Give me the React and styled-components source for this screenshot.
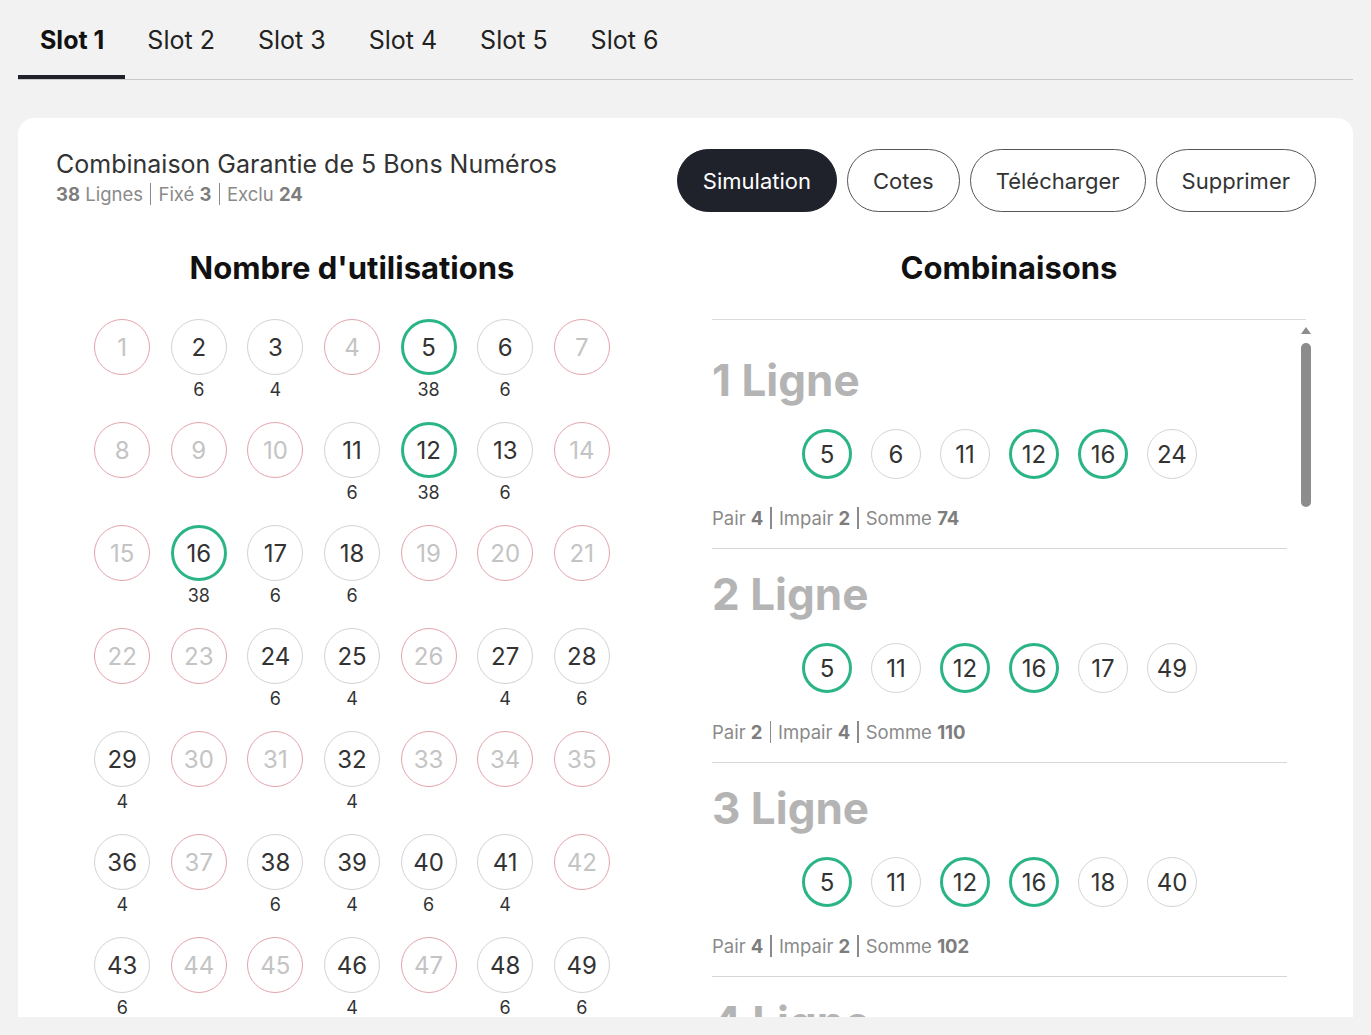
import React from 'react';
import styled, { createGlobalStyle } from 'styled-components';

const GlobalStyle = createGlobalStyle`
  html, body {
    margin: 0;
    padding: 0;
    background: #f2f2f2;
    font-family: Inter, "Liberation Sans", sans-serif;
    color: #222;
  }
  * { box-sizing: border-box; }
`;

const EXCLUDED = [1, 4, 7, 8, 9, 10, 14, 15, 19, 20, 21, 22, 23, 26, 30, 31, 33, 34, 35, 37, 42, 44, 45, 47];
const FIXED = [5, 12, 16];
const COUNTS = {
  2: 6, 3: 4, 5: 38, 6: 6, 11: 6, 12: 38, 13: 6, 16: 38, 17: 6, 18: 6,
  24: 6, 25: 4, 27: 4, 28: 6, 29: 4, 32: 4, 36: 4, 38: 6, 39: 4, 40: 6,
  41: 4, 43: 6, 46: 4, 48: 6, 49: 6,
};

const LINES = [
  { nums: [5, 6, 11, 12, 16, 24], pair: 4, impair: 2, somme: 74 },
  { nums: [5, 11, 12, 16, 17, 49], pair: 2, impair: 4, somme: 110 },
  { nums: [5, 11, 12, 16, 18, 40], pair: 4, impair: 2, somme: 102 },
  { nums: [5, 12, 13, 16, 25, 41], pair: 2, impair: 4, somme: 112 },
];

const kindOf = (n) => (FIXED.includes(n) ? 'fixed' : EXCLUDED.includes(n) ? 'excluded' : 'normal');

const App = () => {
  const numbers = Array.from({ length: 49 }, (_, i) => i + 1);
  return (
    <>
      <GlobalStyle />
      <Page>
        <Tabs>
          {['Slot 1', 'Slot 2', 'Slot 3', 'Slot 4', 'Slot 5', 'Slot 6'].map((t, i) => (
            <Tab key={t} active={i === 0}>{t}</Tab>
          ))}
        </Tabs>
        <Viewport>
          <Card>
            <CardHeader>
              <TitleBlock>
                <Title>Combinaison Garantie de 5 Bons Numéros</Title>
                <Meta>
                  <b>38</b> Lignes<Sep />Fixé <b>3</b><Sep />Exclu <b>24</b>
                </Meta>
              </TitleBlock>
              <Actions>
                <PillButton dark>Simulation</PillButton>
                <PillButton>Cotes</PillButton>
                <PillButton>Télécharger</PillButton>
                <PillButton>Supprimer</PillButton>
              </Actions>
            </CardHeader>
            <Columns>
              <Column>
                <Heading>Nombre d'utilisations</Heading>
                <NumberGrid>
                  {numbers.map((n) => (
                    <NumberCell key={n}>
                      <Ball kind={kindOf(n)}>{n}</Ball>
                      <Count>{COUNTS[n] || ''}</Count>
                    </NumberCell>
                  ))}
                </NumberGrid>
              </Column>
              <Column>
                <HeadingBox>
                  <Heading>Combinaisons</Heading>
                </HeadingBox>
                <ScrollArea>
                  <LineList>
                    {LINES.map((line, i) => (
                      <LineBlock key={i}>
                        <LineTitle>{i + 1} Ligne</LineTitle>
                        <LineBalls>
                          {line.nums.map((n) => (
                            <SmallBall key={n} fixed={FIXED.includes(n)}>{n}</SmallBall>
                          ))}
                        </LineBalls>
                        <LineStats>
                          Pair <b>{line.pair}</b><Sep />Impair <b>{line.impair}</b><Sep />Somme <b>{line.somme}</b>
                        </LineStats>
                      </LineBlock>
                    ))}
                  </LineList>
                  <Scrollbar>
                    <ScrollArrow />
                    <ScrollThumb />
                  </Scrollbar>
                </ScrollArea>
              </Column>
            </Columns>
          </Card>
        </Viewport>
      </Page>
    </>
  );
};

export default App;

const Page = styled.div`
  height: 100vh;
  display: flex;
  flex-direction: column;
  padding: 0 18px 18px;
`;

const Tabs = styled.div`
  display: flex;
  border-bottom: 1px solid #c9c9c9;
`;

const Tab = styled.div`
  padding: 22px 21px 17px 22px;
  font-size: 25px;
  line-height: 36px;
  font-weight: ${(p) => (p.active ? 700 : 400)};
  color: ${(p) => (p.active ? '#111' : '#222')};
  border-bottom: 4px solid ${(p) => (p.active ? '#1f222b' : 'transparent')};
  margin-bottom: 0;
  cursor: pointer;
`;

const Viewport = styled.div`
  flex: 1;
  overflow: hidden;
  margin-top: 38px;
`;

const Card = styled.div`
  background: #fff;
  border-radius: 16px;
  padding: 31px 37px 40px 38px;
`;

const CardHeader = styled.div`
  display: flex;
  justify-content: space-between;
  align-items: flex-start;
`;

const TitleBlock = styled.div`
  display: flex;
  flex-direction: column;
`;

const Title = styled.div`
  font-size: 25px;
  line-height: 30px;
  color: #333;
`;

const Meta = styled.div`
  font-size: 18.5px;
  line-height: 26px;
  color: #8a8a8a;
  margin-top: 2px;
  white-space: nowrap;
  b { font-weight: 700; color: #7d7d7d; }
`;

const Sep = styled.span`
  display: inline-block;
  vertical-align: middle;
  width: 1.5px;
  height: 22px;
  background: #8a8a8a;
  margin: -3px 7px 0;
`;

const Actions = styled.div`
  display: flex;
  gap: 10px;
`;

const PillButton = styled.button`
  height: 63px;
  padding: 0 25px;
  border-radius: 32px;
  font-family: inherit;
  font-size: 22px;
  background: ${(p) => (p.dark ? '#1f222b' : '#fff')};
  color: ${(p) => (p.dark ? '#fff' : '#333')};
  border: 1px solid ${(p) => (p.dark ? '#1f222b' : '#555')};
  cursor: pointer;
`;

const Columns = styled.div`
  display: grid;
  grid-template-columns: 592px 1fr;
  column-gap: 64px;
  margin-top: 38px;
`;

const Column = styled.div`
  display: flex;
  flex-direction: column;
  min-width: 0;
`;

const Heading = styled.h2`
  margin: 0;
  text-align: center;
  font-size: 31px;
  line-height: 36px;
  font-weight: 700;
  color: #111;
`;

const HeadingBox = styled.div`
  margin-right: 10px;
  padding-bottom: 33px;
  border-bottom: 1px solid #dcdcdc;
`;

const NumberGrid = styled.div`
  display: grid;
  grid-template-columns: repeat(7, 56px);
  column-gap: 20.6px;
  row-gap: 20px;
  justify-content: center;
  margin-top: 33px;
`;

const NumberCell = styled.div`
  display: flex;
  flex-direction: column;
  align-items: center;
`;

const Ball = styled.div`
  width: 56px;
  height: 56px;
  border-radius: 50%;
  display: flex;
  align-items: center;
  justify-content: center;
  font-size: 24px;
  color: ${(p) => (p.kind === 'excluded' ? '#c4c4c4' : '#333')};
  border: ${(p) =>
    p.kind === 'fixed' ? '3px solid #2bb584' : p.kind === 'excluded' ? '1px solid #e3a3ab' : '1px solid #d2d2d2'};
`;

const Count = styled.div`
  height: 24px;
  margin-top: 3px;
  font-size: 18px;
  line-height: 24px;
  color: #333;
`;

const ScrollArea = styled.div`
  display: flex;
  height: 720px;
  overflow: hidden;
`;

const LineList = styled.div`
  flex: 1;
  padding-top: 15px;
  padding-right: 11px;
`;

const LineBlock = styled.div`
  display: flex;
  flex-direction: column;
  padding: 20px 0 17px;
  border-bottom: 1px solid #d6d6d6;
`;

const LineTitle = styled.div`
  font-size: 44px;
  line-height: 50px;
  font-weight: 700;
  color: #b4b4b4;
`;

const LineBalls = styled.div`
  display: flex;
  justify-content: center;
  gap: 19px;
  margin-top: 24px;
`;

const SmallBall = styled.div`
  width: 50px;
  height: 50px;
  border-radius: 50%;
  display: flex;
  align-items: center;
  justify-content: center;
  font-size: 24px;
  color: #333;
  border: ${(p) => (p.fixed ? '3px solid #2bb584' : '1px solid #d4d4d4')};
`;

const LineStats = styled.div`
  margin-top: 26px;
  font-size: 18.5px;
  line-height: 26px;
  color: #8a8a8a;
  white-space: nowrap;
  b { font-weight: 700; color: #7d7d7d; }
`;

const Scrollbar = styled.div`
  width: 16px;
  margin-right: 2px;
  display: flex;
  flex-direction: column;
  align-items: center;
  padding-top: 7px;
`;

const ScrollArrow = styled.div`
  width: 0;
  height: 0;
  border-left: 5px solid transparent;
  border-right: 5px solid transparent;
  border-bottom: 7px solid #8c8c8c;
`;

const ScrollThumb = styled.div`
  width: 10px;
  height: 164px;
  margin-top: 9px;
  border-radius: 5px;
  background: #8c8c8c;
`;
